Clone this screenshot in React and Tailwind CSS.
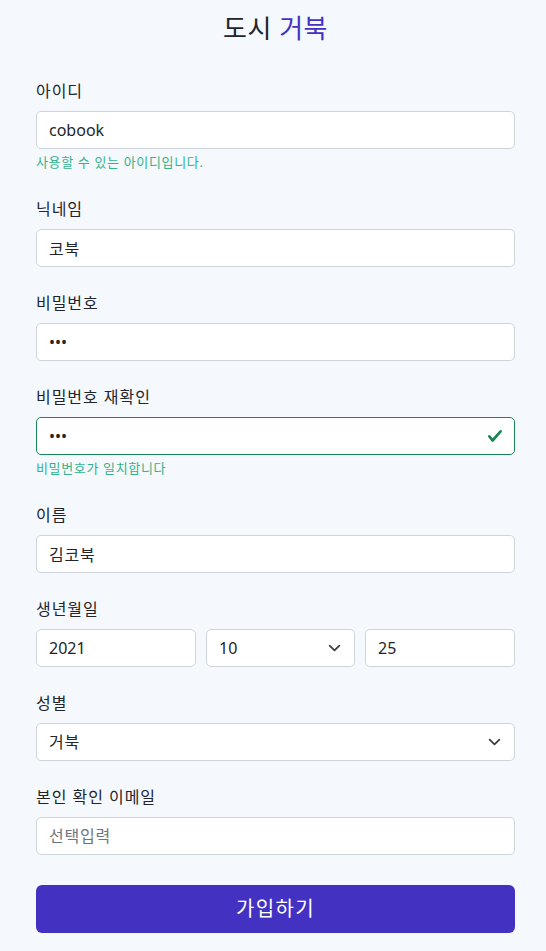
import React from 'react';

const font = { fontFamily: '"Noto Sans", "Noto Sans CJK KR", sans-serif' };

const Chevron = () => (
  <svg className="absolute right-[14px] top-1/2 -translate-y-1/2 w-[13px] h-[13px] pointer-events-none" viewBox="0 0 16 16" fill="none">
    <path d="M2 5l6 6 6-6" stroke="#343a40" strokeWidth="2" strokeLinecap="round" strokeLinejoin="round" />
  </svg>
);

const Field = ({ label, children, help }) => (
  <div className="mb-[24px]">
    <label className="block text-[16px] leading-6 tracking-[0.06em] text-[#212529] mb-2">{label}</label>
    {children}
    {help && <p className="mt-[3px] text-[13px] leading-[21px] tracking-[0.05em] text-[#34b38a]">{help}</p>}
  </div>
);

const inputCls =
  'w-full h-[38px] px-3 rounded-[5px] border border-[#ced4da] bg-white text-[16px] text-[#212529] outline-none';

const App = () => {
  return (
    <div className="min-h-screen bg-[#f5f8fd]" style={font}>
      <div className="pl-[36px] pr-[31px]">
        <h1 className="pt-[10px] h-[46px] text-center text-[26px] leading-9 tracking-[0.02em] text-[#212529]">
          도시 <span className="text-[#4332c2]">거북</span>
        </h1>
        <div className="mt-[33px]">
          <Field label="아이디" help="사용할 수 있는 아이디입니다.">
            <input className={inputCls} defaultValue="cobook" />
          </Field>
          <Field label="닉네임">
            <input className={inputCls + ' tracking-[0.05em]'} defaultValue="코북" />
          </Field>
          <Field label="비밀번호">
            <input className={inputCls} type="password" defaultValue="123" />
          </Field>
          <Field label="비밀번호 재확인" help="비밀번호가 일치합니다">
            <div className="relative">
              <input className={inputCls + ' !border-[#198754] pr-10'} type="password" defaultValue="123" />
              <svg className="absolute right-[12px] top-1/2 -translate-y-1/2 w-4 h-4" viewBox="0 0 8 8">
                <path fill="#198754" d="M2.3 6.73.6 4.53c-.4-1.040.46-1.4 1.1-.8l1.1 1.4 3.4-3.8c.6-.63 1.6-.27 1.2.7l-4 4.6c-.43.5-.8.4-1.1.1z" />
              </svg>
            </div>
          </Field>
          <Field label="이름">
            <input className={inputCls + ' tracking-[0.05em]'} defaultValue="김코북" />
          </Field>
          <Field label="생년월일">
            <div className="grid grid-cols-[160px_149px_1fr] gap-[10px]">
              <input className={inputCls + ' min-w-0'} defaultValue="2021" />
              <div className="relative min-w-0">
                <select className={inputCls + ' appearance-none'} defaultValue="10">
                  <option value="10">10</option>
                </select>
                <Chevron />
              </div>
              <input className={inputCls + ' min-w-0'} defaultValue="25" />
            </div>
          </Field>
          <Field label="성별">
            <div className="relative">
              <select className={inputCls + ' appearance-none tracking-[0.05em]'} defaultValue="turtle">
                <option value="turtle">거북</option>
              </select>
              <Chevron />
            </div>
          </Field>
          <Field label="본인 확인 이메일">
            <input className={inputCls + ' tracking-[0.05em] placeholder:text-[#6c757d]'} placeholder="선택입력" />
          </Field>
          <button className="mt-[6px] w-full h-[48px] rounded-[6px] bg-[#4332c2] text-white text-[20px] tracking-[0.07em]">
            가입하기
          </button>
        </div>
      </div>
    </div>
  );
};

export default App;
